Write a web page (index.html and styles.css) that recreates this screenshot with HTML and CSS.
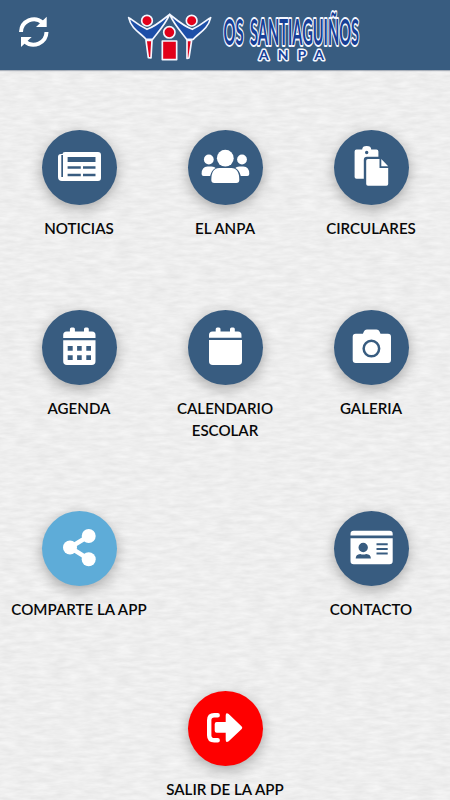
FILE: index.html
```
<!DOCTYPE html>
<html lang="gl">
    <head>
        <meta charset="utf-8">
        <meta name="viewport" content="width=device-width, initial-scale=1">
        <title>ANPA Os Santiaguiños</title>
        <link rel="stylesheet" href="styles.css">
    </head>
    <body>
        <svg class="paper" width="450" height="800">
            <filter id="grain" x="0" y="0" width="100%" height="100%" color-interpolation-filters="sRGB">
                <feTurbulence type="fractalNoise" baseFrequency="0.06 0.24" numOctaves="3" seed="4"/>
                <feColorMatrix values="0.08 0 0 0 0.893  0.08 0 0 0 0.893  0.08 0 0 0 0.893  0 0 0 0 1"/>
            </filter>
            <rect width="450" height="800" filter="url(#grain)"/>
        </svg>
        <header class="topbar">
            <svg class="refresh" viewBox="18 15 32 34">
                <path d="M21 32A13 13 0 0 1 42.5 22.5M46.5 32A13 13 0 0 1 25 41.5" fill="none" stroke="#fff" stroke-width="4"/>
                <path d="M46.700 16.800V27H36zM21 47V37h10.700z" fill="#fff"/>
            </svg>
            <svg class="logo" viewBox="120 0 250 70">
                <g transform="translate(120 5) scale(.3333)" stroke="#f4f7ff" stroke-width="5" stroke-linejoin="round">
                    <path d="M78 106h18l-3 53-8-1zM201 106h14l-8 53-6 1z" fill="#e2001a"/>
                    <path d="M26 38C36 42 50 58 81 73C110 62 130 43 149 28C135 60 108 88 98 103H78C66 86 34 75 26 38z" fill="#1d4fa8"/>
                    <path d="M272 38C262 42 248 58 217 73C188 62 168 43 149 28C163 60 190 88 200 103H220C232 86 264 75 272 38z" fill="#1d4fa8"/>
                    <circle cx="81" cy="47" r="16" fill="#e2001a"/>
                    <circle cx="215" cy="47" r="16" fill="#e2001a"/>
                    <circle cx="148" cy="82" r="17" fill="#e2001a"/>
                    <path d="M127 108h43v56h-43z" fill="#e2001a"/>
                </g>
                <g class="brand">
                    <text class="brand-name" transform="translate(223.500 44.500) scale(.4 1)">OS</text>
                    <text class="brand-name" transform="translate(250 44.500) scale(.395 1)">SANTIAGUIÑOS</text>
                    <text class="brand-sub" x="259" y="59.500" textLength="65">ANPA</text>
                </g>
            </svg>
        </header>
        <main class="menu">
            <a class="item">
                <span class="circle"><svg viewBox="0 0 75 75">
                    <path fill-rule="evenodd" d="M23 22h33q3 0 3 3v23q0 3-3 3H20q-4 0-4-4V27q0-3 3-3h1.500q0-2 2.500-2zM19.300 25v22h1.700V25zM25.600 27v4.900h27.900V27zM25.600 36.300v2.400h13.200v-2.400zm15.400 0v2.400h12.500v-2.400zM25.600 43.800v2.400h13.200v-2.400zm15.400 0v2.400h12.500v-2.400z"/>
                </svg></span>
                <span class="label">NOTICIAS</span>
            </a>
            <a class="item">
                <span class="circle"><svg viewBox="0 0 75 75">
                    <circle cx="37.300" cy="28.200" r="8.400"/>
                    <circle cx="20.800" cy="29.500" r="4.900"/>
                    <circle cx="54" cy="29.500" r="4.900"/>
                    <path d="M23.300 50q0-12 8-12h12q8 0 8 12 0 3-3 3h-22q-3 0-3-3zM13.600 44q0-7.500 6-7.500h4q3 0 4 1.500-4 2-5.500 8h-6.500q-2 0-2-2zM61.300 44q0-7.500-6-7.500h-4q-3 0-4 1.500 4 2 5.500 8h6.500q2 0 2-2z"/>
                </svg></span>
                <span class="label">EL ANPA</span>
            </a>
            <a class="item">
                <span class="circle"><svg viewBox="0 0 75 75">
                    <path fill-rule="evenodd" d="M22.500 19.500h5.700a4.500 3.400 0 0 1 9 0h5.200q2 0 2 2v5.300H33q-3.200 0-3.200 3.200v18.700H22.500q-1.900 0-1.900-1.800V21.500q0-2 1.900-2zM32.700 20.800a1.700 1.700 0 1 0 0 3.400 1.700 1.700 0 0 0 0-3.400z"/>
                    <path d="M34 29h11.500v9h8.700v16q0 1.800-1.800 1.800H34q-1.800 0-1.800-1.800V30.800Q32.200 29 34 29zM47.300 29l6.900 7.200h-6.900z"/>
                </svg></span>
                <span class="label">CIRCULARES</span>
            </a>
            <a class="item">
                <span class="circle"><svg viewBox="0 0 75 75">
                    <path d="M21.200 28v-3q0-3.500 3.500-3.500h3.200V19q0-1.500 1.500-1.500h2q1.500 0 1.500 1.500v2.500H42V19q0-1.500 1.500-1.500h1.800q1.500 0 1.500 1.500v2.500h3.200q3.500 0 3.500 3.500v3z"/>
                    <path fill-rule="evenodd" d="M21.200 30.200h32.300v21q0 3.800-3.800 3.800H25q-3.800 0-3.800-3.800zM25.700 36v4.700h5V36zm9.400 0v4.700h4.600V36zm9.200 0v4.700h4.700V36zM25.700 45.300V50h5v-4.700zm9.400 0V50h4.600v-4.700zm9.200 0V50h4.700v-4.700z"/>
                </svg></span>
                <span class="label">AGENDA</span>
            </a>
            <a class="item">
                <span class="circle"><svg viewBox="0 0 75 75">
                    <path d="M21 27.800V25q0-3.500 3.500-3.500h3.200V19q0-1.500 1.500-1.500h1.800q1.500 0 1.500 1.500v2.500h9.500V19q0-1.500 1.500-1.500h1.800q1.500 0 1.500 1.500v2.500h3.200q3.500 0 3.500 3.500v2.800zM21 30h33v21.200q0 3.800-3.800 3.800H24.800q-3.800 0-3.800-3.800z"/>
                </svg></span>
                <span class="label">CALENDARIO ESCOLAR</span>
            </a>
            <a class="item">
                <span class="circle"><svg viewBox="0 0 75 75">
                    <path fill-rule="evenodd" d="M21.700 23.700h7.200l1-2.200q.8-2 3-2h9.600q2.200 0 3 2l1 2.200H54q3 0 3 3V50q0 3-3 3H21.700q-3 0-3-3V26.700q0-3 3-3zM37.400 29.600a9 9 0 1 0 0 18 9 9 0 0 0 0-18zm0 2.500a6.500 6.500 0 1 1 0 13 6.500 6.500 0 0 1 0-13z"/>
                </svg></span>
                <span class="label">GALERIA</span>
            </a>
            <a class="item">
                <span class="circle share"><svg viewBox="0 0 75 75">
                    <path d="M46.700 25L28 36.500l18.700 11.700" fill="none" stroke="#fff" stroke-width="4.500"/>
                    <circle cx="46.700" cy="25" r="7"/>
                    <circle cx="28" cy="36.500" r="7"/>
                    <circle cx="46.700" cy="48.200" r="7"/>
                </svg></span>
                <span class="label">COMPARTE LA APP</span>
            </a>
            <a class="item contact">
                <span class="circle"><svg viewBox="0 0 75 75">
                    <path d="M16.500 24.500V23q0-3.200 3.200-3.200h35.800q3.200 0 3.200 3.200v1.500z"/>
                    <path fill-rule="evenodd" d="M16.500 27.200h42.200V50q0 3.200-3.200 3.200H19.700q-3.200 0-3.200-3.200zM29.200 31.800a4.700 4.700 0 1 0 0 9.400 4.700 4.700 0 0 0 0-9.400zM21.700 47.500h15.200q0-4.200-4.700-4.500-3 1.200-6 0-4.500.3-4.500 4.500zM42.500 32.300v2h11.200v-2zm0 4.600v2h11.200v-2zm0 4.700v2h11.200v-2z"/>
                </svg></span>
                <span class="label">CONTACTO</span>
            </a>
            <a class="item exit">
                <span class="circle exit-circle"><svg viewBox="1.300 0 75 75">
                    <path d="M31 24.300h-3.500q-5 0-5 5v15q0 5 5 5H31" fill="none" stroke="#fff" stroke-width="4.400" stroke-linecap="round"/>
                    <path d="M30 31h9v-6.500q0-3.500 3-1.500l13 12.500q1.200 1.300 0 2.600L42 50.200q-3 2-3-1.500v-7h-9q-2 0-2-2V33q0-2 2-2z"/>
                </svg></span>
                <span class="label">SALIR DE LA APP</span>
            </a>
        </main>
    </body>
</html>
```
FILE: styles.css
```
* {
    box-sizing: border-box;
}
body {
    margin: 0;
    height: 800px;
    overflow: hidden;
    background-color: #ededed;
    font-family: Lato, "Liberation Sans", sans-serif;
}
/* paper texture behind everything */
.paper {
    position: absolute;
    top: 0;
    left: 0;
    z-index: -1;
}
.topbar {
    display: flex;
    align-items: center;
    height: 70px;
    padding-left: 18px;
    background-color: #385c80;
    box-shadow: 0 1px 1px rgba(40, 60, 90, 0.35);
}
.refresh {
    width: 32px;
    height: 34px;
    margin-top: -6px;
}
.logo {
    width: 250px;
    height: 70px;
    margin-left: 70px;
}
.brand {
    fill: #173f96;
    stroke: #f4f7ff;
    stroke-width: 3px;
    stroke-linejoin: round;
    paint-order: stroke;
}
.brand-name {
    font-size: 37px;
    font-weight: 700;
    vector-effect: non-scaling-stroke;
}
.brand-sub {
    font-size: 14px;
    font-weight: 700;
}
.menu {
    display: grid;
    grid-template-columns: repeat(3, 146px);
    justify-content: center;
    row-gap: 70px;
    padding-top: 60px;
}
.item {
    display: flex;
    flex-direction: column;
    align-items: center;
    gap: 13px;
}
.circle {
    width: 75px;
    height: 75px;
    border-radius: 50%;
    background-color: #385c80;
    box-shadow: 0 4px 14px rgba(0, 0, 0, 0.3);
}
.circle svg {
    display: block;
    width: 75px;
    height: 75px;
    fill: #fff;
}
.share {
    background-color: #5eacd8;
}
.exit-circle {
    background-color: #fe0000;
}
.label {
    font-size: 15.1px;
    font-weight: 600;
    line-height: 21.8px;
    text-align: center;
    color: #080808;
}
.contact {
    grid-column: 3;
}
.exit {
    grid-column: 2;
}
```
